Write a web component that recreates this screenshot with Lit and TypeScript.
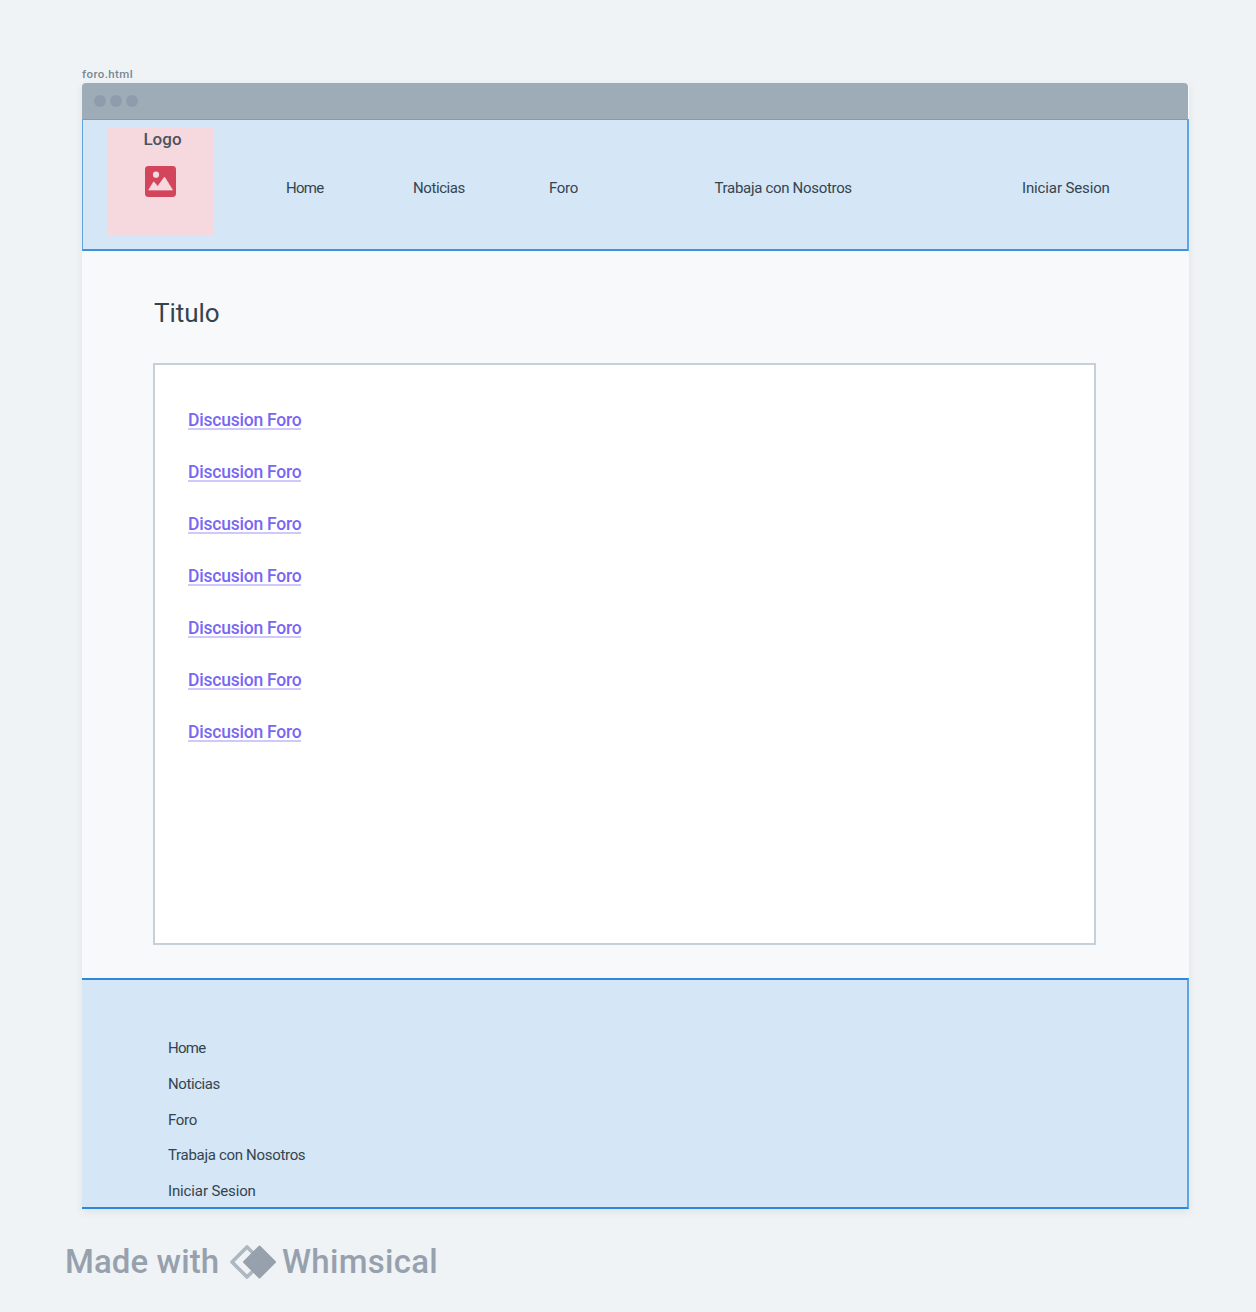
import { LitElement, html, css } from "lit";
import { customElement } from "lit/decorators.js";

const LINKS = ["Home", "Noticias", "Foro", "Trabaja con Nosotros", "Iniciar Sesion"];
const KEYS = ["home", "news", "forum", "jobs", "login"];
const THREADS = Array.from({ length: 7 }, () => "Discusion Foro");

@customElement("app-root")
export class AppRoot extends LitElement {
  static styles = css`
    :host {
      display: block;
      box-sizing: border-box;
      width: 1256px;
      height: 1312px;
      padding: 67px 67px 0 82px;
      background: #eff3f6;
      color: #34444f;
      font-family: Roboto, "Liberation Sans", sans-serif;
      overflow: hidden;
    }
    * { box-sizing: border-box; }
    .file { height: 16px; line-height: 15px; font-size: 11.5px; font-weight: 500; color: #788896; white-space: nowrap; }
    .file span { letter-spacing: 0.4px; }
    .frame { width: 1107px; height: 1126px; display: flex; flex-direction: column; border-radius: 4px 4px 0 0; box-shadow: 0 3px 8px rgba(70, 80, 90, 0.09); background: #f8f9fb; }
    .bar { width: 1106px; height: 36px; flex: none; display: flex; align-items: center; gap: 4px; padding-left: 12px; background: #9eacb8; border-radius: 4px 4px 0 0; }
    .dot { width: 12px; height: 12px; border-radius: 50%; background: #8e9dab; }
    .head { height: 132px; flex: none; display: flex; background: #d5e6f6; border: 1px solid #5fa5e1; border-right-width: 2px; border-bottom: 2px solid #3c92dd; padding: 7px 0 0 25px; }
    .logo { width: 106px; height: 109px; background: #f6d9de; display: flex; flex-direction: column; align-items: center; }
    .logoname { font-size: 17px; font-weight: 500; line-height: 25px; height: 39px; padding-left: 3px; color: #4a5361; }
    .pic { width: 31px; height: 31px; display: block; margin-right: 1px; }
    .nav { display: grid; grid-template-columns: 127px 136px 165.5px 307.5px auto; padding: 51px 0 0 72px; }
    .item { font-size: 15px; line-height: 20px; white-space: nowrap; }
    .home { letter-spacing: -0.75px; }
    .news { letter-spacing: -0.42px; }
    .forum { letter-spacing: -0.3px; }
    .jobs { letter-spacing: -0.31px; }
    .login { letter-spacing: -0.13px; }
    .main { flex: 1; width: 1106px; padding: 45px 92px 0 71px; }
    .title { margin: 0; font-size: 26px; font-weight: 400; line-height: 34px; letter-spacing: -0.05px; padding-left: 1px; height: 67px; }
    .box { height: 582px; width: 943px; background: #fff; border: 2px solid #c6d0d9; padding: 44px 0 0 33px; display: flex; flex-direction: column; align-items: flex-start; gap: 31px; }
    .thread { height: 21px; line-height: 22px; font-size: 17.5px; font-weight: 500; letter-spacing: -0.22px; color: #7767f2; border-bottom: 2px solid #cfc8fb; white-space: nowrap; text-decoration: none; }
    .foot { height: 231px; flex: none; background: #d5e6f6; border: solid #2c88d9; border-width: 2px 2px 2px 0; border-right-color: #5fa5e1; padding: 58px 0 0 86px; display: flex; flex-direction: column; gap: 15.8px; }
    .brand { display: flex; align-items: center; height: 40px; margin: 32px 0 0 -17px; color: #97a1ad; font-weight: 500; font-size: 33px; white-space: nowrap; }
    .made { width: 164px; letter-spacing: 0.1px; }
    .mark { width: 48px; height: 36px; margin-top: 1px; }
    .name { margin-left: 5px; letter-spacing: 0.3px; }
  `;

  render() {
    return html`
      <div class="file"><span>foro.html</span></div>
      <div class="frame">
        <div class="bar"><i class="dot"></i><i class="dot"></i><i class="dot"></i></div>
        <header class="head">
          <div class="logo">
            <div class="logoname">Logo</div>
            <svg class="pic" viewBox="0 0 31 31">
              <rect width="31" height="31" rx="3.4" fill="#d3455b" />
              <circle cx="11" cy="8.7" r="3.1" fill="#f6d9de" />
              <path d="M3.7 24 8.700 15.800 12.700 20.400 19.500 11 27.500 24Z" fill="#f6d9de" stroke="#f6d9de" stroke-width=".7" stroke-linejoin="round" />
            </svg>
          </div>
          <nav class="nav">${LINKS.map((l, i) => html`<div><span class="item ${KEYS[i]}">${l}</span></div>`)}</nav>
        </header>
        <main class="main">
          <h1 class="title">Titulo</h1>
          <section class="box">${THREADS.map((t) => html`<a class="thread">${t}</a>`)}</section>
        </main>
        <footer class="foot">${LINKS.map((l, i) => html`<div class="item"><span class="${KEYS[i]}">${l}</span></div>`)}</footer>
      </div>
      <div class="brand">
        <span class="made">Made with</span>
        <svg class="mark" viewBox="0 0 48 36">
          <path d="M18 3 3 18 18 33 33 18Z" fill="none" stroke="#aeb8c2" stroke-width="3.6" stroke-linejoin="round" />
          <path d="M30.500 2.500 15 18 30.500 33.500 46 18Z" fill="#97a1ad" stroke="#97a1ad" stroke-width="2" stroke-linejoin="round" />
        </svg>
        <span class="name">Whimsical</span>
      </div>
    `;
  }
}
